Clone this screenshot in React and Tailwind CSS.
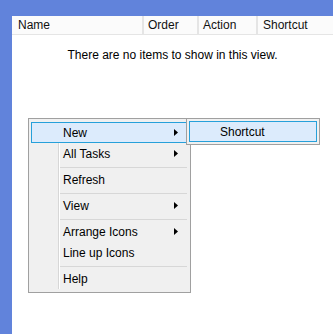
import { Fragment } from 'react'

const FONT = { fontFamily: '"Liberation Sans", Arial, sans-serif' }

const ITEMS = [
  { label: 'New', sub: true, active: true },
  { label: 'All Tasks', sub: true },
  { sep: true },
  { label: 'Refresh' },
  { sep: true },
  { label: 'View', sub: true },
  { sep: true },
  { label: 'Arrange Icons', sub: true },
  { label: 'Line up Icons' },
  { sep: true },
  { label: 'Help' },
]

function Arrow() {
  return (
    <svg width="4" height="7" viewBox="0 0 4 7" className="shrink-0">
      <polygon points="0,0 4,3.5 0,7" fill="#000" />
    </svg>
  )
}

function MenuItem({ item }) {
  if (item.sep) {
    return (
      <div className="h-[5px] pt-[3px]">
        <div className="ml-[29px] mr-px h-px bg-[#d7d7d7]" />
      </div>
    )
  }
  return (
    <div
      className={`h-[21px] flex items-center justify-between border pl-[31px] pr-[9px] text-[12px] text-black ${
        item.active ? 'border-[#26a0da] bg-[#dcebfc]' : 'border-transparent'
      }`}
    >
      <span>{item.label}</span>
      {item.sub && <Arrow />}
    </div>
  )
}

export default function App() {
  return (
    <div className="relative w-[333px] h-[334px] bg-[#6183db] pt-[16px] pl-[12px] overflow-hidden" style={FONT}>
      <div className="w-full h-full bg-white">
        <div className="flex h-[19px] bg-[#fbfbfb] border-b border-[#e5e5e5] text-[12px] text-[#111]">
          <div className="w-[130px] pl-[6px] flex items-center">Name</div>
          <div className="w-[2px] bg-[#e5e5e5]" />
          <div className="w-[53px] pl-[4px] flex items-center">Order</div>
          <div className="w-[2px] bg-[#e5e5e5]" />
          <div className="w-[57px] pl-[4px] flex items-center">Action</div>
          <div className="w-[2px] bg-[#e5e5e5]" />
          <div className="flex-1 pl-[5px] flex items-center">Shortcut</div>
        </div>
        <div className="text-center text-[12px] text-black pt-[11px]">
          There are no items to show in this view.
        </div>
      </div>

      <div className="absolute left-[28px] top-[118px] w-[163px] border border-[#a0a0a0] bg-[#f0f0f0] px-[2px] py-[3px]">
        <div className="absolute left-[29px] top-[3px] bottom-[3px] w-px bg-[#d7d7d7]" />
        <div className="absolute left-[30px] top-[3px] bottom-[3px] w-px bg-white" />
        <div className="relative">
          {ITEMS.map((item, i) => (
            <Fragment key={i}>
              <MenuItem item={item} />
            </Fragment>
          ))}
        </div>
      </div>

      <div className="absolute left-[186px] top-[118px] w-[134px] border border-[#a0a0a0] bg-[#f0f0f0] px-[2px] py-[2px]">
        <div className="h-[21px] flex items-center border border-[#26a0da] bg-[#dcebfc] pl-[30px] text-[12px] text-black">
          Shortcut
        </div>
      </div>
    </div>
  )
}
